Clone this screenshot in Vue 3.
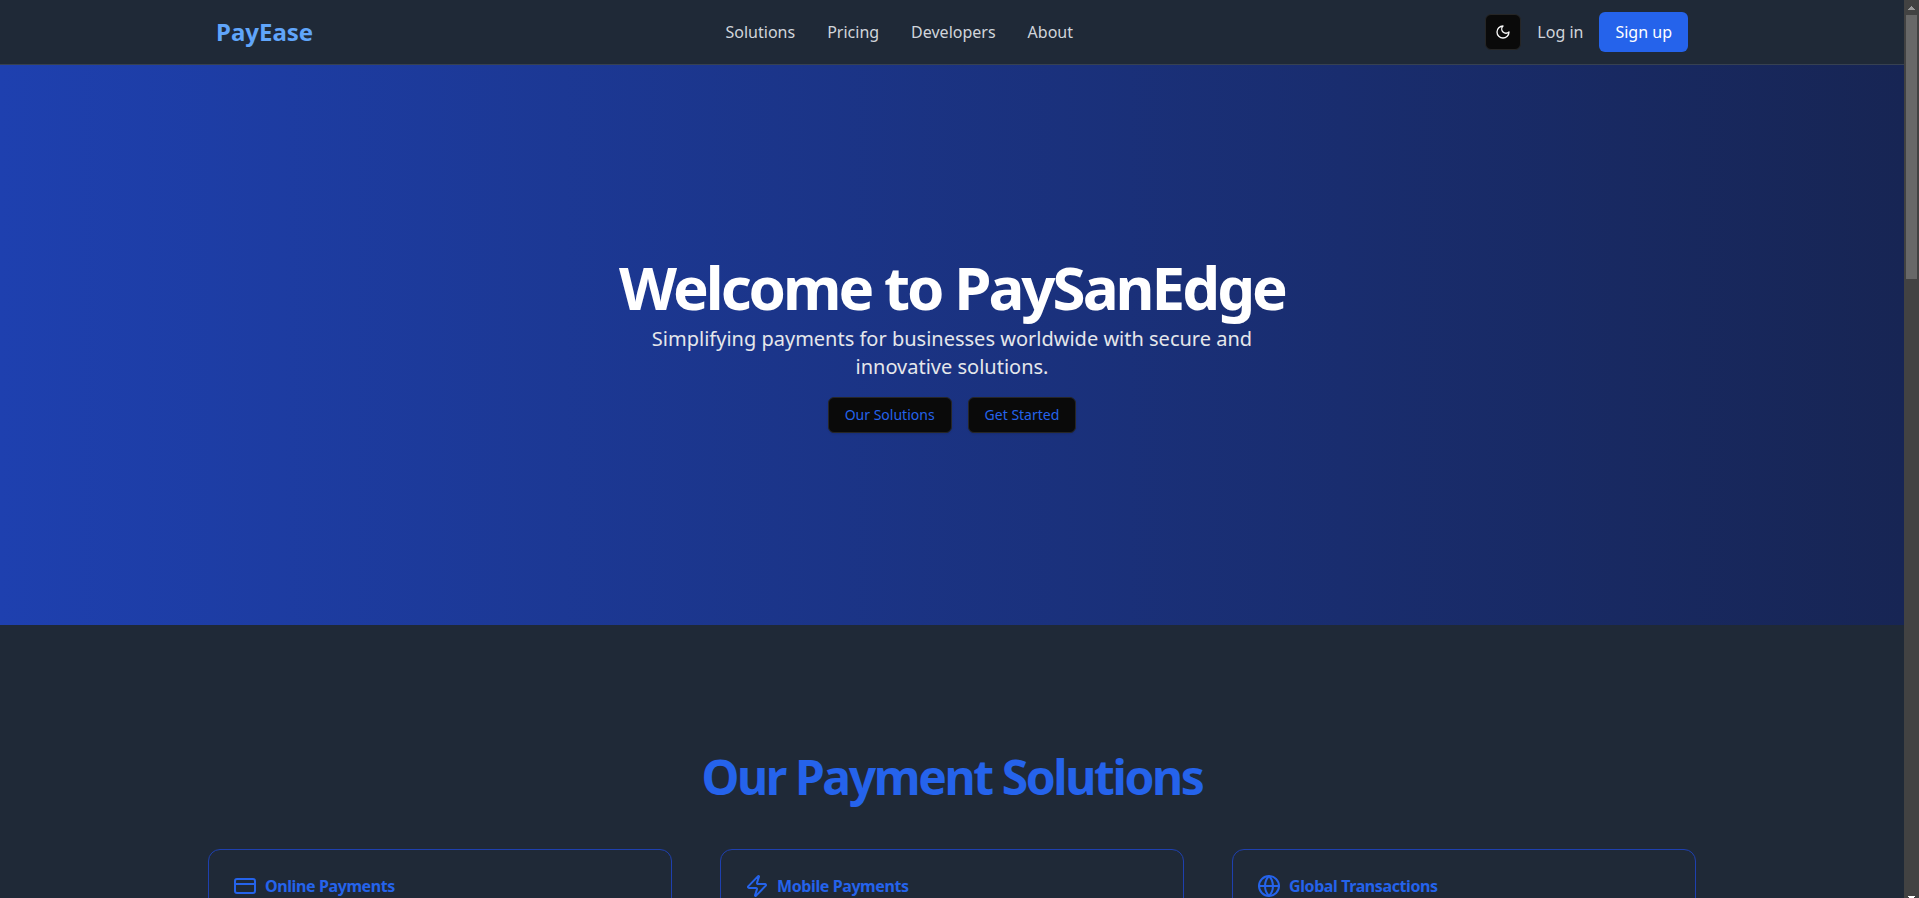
<script setup>
const links = ['Solutions', 'Pricing', 'Developers', 'About']
const cards = [
  {
    title: 'Online Payments',
    paths: ['M4 5h16a2 2 0 0 1 2 2v10a2 2 0 0 1-2 2H4a2 2 0 0 1-2-2V7a2 2 0 0 1 2-2Z', 'M2 10h20'],
  },
  {
    title: 'Mobile Payments',
    paths: ['M4 14a1 1 0 0 1-.78-1.63l9.9-10.2a.5.5 0 0 1 .86.46l-1.92 6.02A1 1 0 0 0 13 10h7a1 1 0 0 1 .78 1.63l-9.9 10.2a.5.5 0 0 1-.86-.46l1.92-6.02A1 1 0 0 0 11 14z'],
  },
  {
    title: 'Global Transactions',
    paths: ['M12 2a10 10 0 1 0 0 20 10 10 0 1 0 0-20', 'M12 2a14.5 14.5 0 0 0 0 20 14.5 14.5 0 0 0 0-20', 'M2 12h20'],
  },
]
</script>

<template>
  <div class="window">
    <div class="page">
      <header class="header">
        <div class="header-inner">
          <a class="brand" href="#">PayEase</a>
          <nav class="nav" aria-label="Main">
            <a v-for="link in links" :key="link" href="#">{{ link }}</a>
          </nav>
          <div class="actions">
            <button class="theme" type="button" aria-label="Toggle theme">
              <svg class="icon" viewBox="0 0 24 24" width="16" height="16" aria-hidden="true">
                <path d="M12 3a6 6 0 0 0 9 9 9 9 0 1 1-9-9Z" />
              </svg>
            </button>
            <a class="login" href="#">Log in</a>
            <a class="signup" href="#">Sign up</a>
          </div>
        </div>
      </header>

      <main>
        <section class="hero">
          <div class="hero-text">
            <h1>Welcome to PaySanEdge</h1>
            <p>Simplifying payments for businesses worldwide with secure and innovative solutions.</p>
          </div>
          <div class="hero-buttons">
            <button type="button">Our Solutions</button>
            <button type="button">Get Started</button>
          </div>
        </section>

        <section class="solutions">
          <h2>Our Payment Solutions</h2>
          <div class="grid">
            <article v-for="card in cards" :key="card.title" class="card">
              <h3>
                <svg class="icon" viewBox="0 0 24 24" width="24" height="24" aria-hidden="true">
                  <path v-for="d in card.paths" :key="d" :d="d" />
                </svg>
                {{ card.title }}
              </h3>
            </article>
          </div>
        </section>
      </main>
    </div>

    <div class="scrollbar" aria-hidden="true">
      <svg class="arrow up" viewBox="0 0 15 15" width="15" height="15"><path d="M4 10h7v-1h-1v-1h-1v-1h-1v-1h-1v1h-1v1h-1v1h-1z" /></svg>
      <div class="thumb"></div>
      <svg class="arrow down" viewBox="0 0 15 2" width="15" height="2"><path d="M4 0h7v1h-1v1h-5v-1h-1z" /></svg>
    </div>
  </div>
</template>

<style>
body {
  margin: 0;
  background: #1f2937;
}
</style>

<style scoped>
* {
  box-sizing: border-box;
}

.window {
  display: flex;
  height: 100vh;
  overflow: hidden;
  background: #1f2937;
  font-family: "Noto Sans", sans-serif;
  font-size: 16px;
  line-height: 24px;
}

.page {
  flex: 1;
  min-width: 0;
  overflow: hidden;
}

a {
  color: inherit;
  text-decoration: none;
}

h1, h2, h3, p {
  margin: 0;
}

button {
  font: inherit;
  cursor: pointer;
}

.icon {
  fill: none;
  stroke: currentColor;
  stroke-width: 2;
  stroke-linecap: round;
  stroke-linejoin: round;
}

.header {
  border-bottom: 1px solid #374151;
}

.header-inner {
  display: flex;
  align-items: center;
  justify-content: space-between;
  max-width: 1536px;
  height: 64px;
  margin: 0 auto;
  padding: 0 32px;
  color: #d1d5db;
}

.brand {
  color: #60a5fa;
  font-size: 24px;
  font-weight: 700;
  line-height: 32px;
}

.nav {
  display: flex;
  gap: 32px;
}

.actions {
  display: flex;
  align-items: center;
  gap: 16px;
}

.theme {
  display: flex;
  align-items: center;
  justify-content: center;
  width: 36px;
  height: 36px;
  padding: 0;
  border: 1px solid #262626;
  border-radius: 6px;
  background: #0a0a0a;
  color: #fafafa;
}

.signup {
  padding: 8px 16px;
  border-radius: 6px;
  background: #2563eb;
  color: #fff;
}

.hero {
  display: flex;
  flex-direction: column;
  align-items: center;
  gap: 16px;
  padding: 192px 24px;
  background: linear-gradient(to right, #1e40af, #172554);
  text-align: center;
}

.hero-text {
  display: flex;
  flex-direction: column;
  align-items: center;
  gap: 8px;
}

h1 {
  color: #fff;
  font-size: 60px;
  font-weight: 700;
  line-height: 60px;
  letter-spacing: -0.05em;
}

.hero p {
  max-width: 640px;
  color: #e5e7eb;
  font-size: 20px;
  line-height: 28px;
}

.hero-buttons {
  display: flex;
  gap: 16px;
}

.hero-buttons button {
  height: 36px;
  padding: 0 16px;
  border: 1px solid #262626;
  border-radius: 6px;
  background: #0a0a0a;
  box-shadow: 0 1px 2px rgba(0, 0, 0, 0.1);
  color: #2563eb;
  font-size: 14px;
  line-height: 20px;
}

.solutions {
  max-width: 1536px;
  margin: 0 auto;
  padding: 128px 24px;
}

h2 {
  margin-bottom: 48px;
  color: #2563eb;
  font-size: 48px;
  font-weight: 700;
  line-height: 48px;
  letter-spacing: -0.05em;
  text-align: center;
}

.grid {
  display: grid;
  grid-template-columns: repeat(3, 1fr);
  gap: 48px;
}

.card {
  min-height: 160px;
  padding: 24px;
  border: 1px solid #1e40af;
  border-radius: 12px;
}

h3 {
  display: flex;
  align-items: center;
  gap: 8px;
  color: #2563eb;
  font-size: 16px;
  font-weight: 700;
  line-height: 24px;
  letter-spacing: -0.025em;
}

.scrollbar {
  display: flex;
  flex-direction: column;
  flex: none;
  width: 15px;
  background: #424242;
}

.arrow {
  display: block;
  flex: none;
}

.up {
  fill: #9a9a9a;
}

.down {
  margin-top: auto;
  fill: #fff;
}

.thumb {
  height: 264px;
  margin: 0 2px;
  background: #686868;
}
</style>
